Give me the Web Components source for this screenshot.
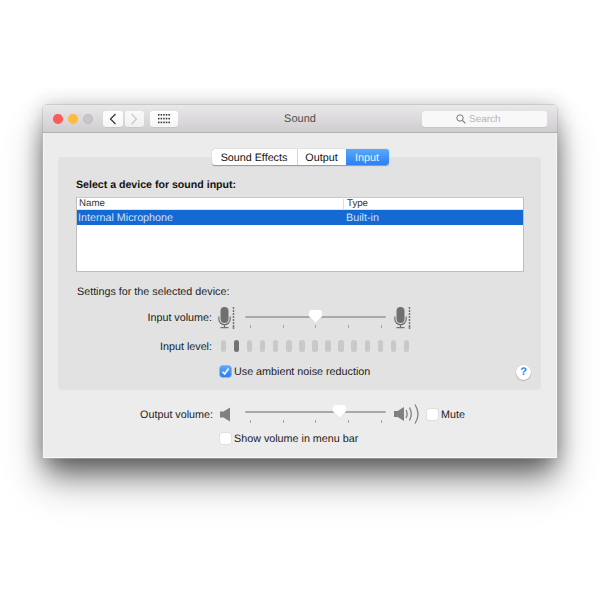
<!DOCTYPE html>
<html>
<head>
<meta charset="utf-8">
<title>Sound</title>
<style>
    html, body { margin: 0; height: 100%; background: #fff; overflow: hidden; }
    body { padding: 105px 0 0 43px; box-sizing: border-box; font: 10.75px "Liberation Sans", Arial, sans-serif; color: #1c1c1c; text-rendering: geometricPrecision; }
</style>
</head>
<body>
<sound-window>
    <title-bar slot="bar" name="Sound"></title-bar>
    <tab-strip active="Input" tabs="Sound Effects,Output,Input"></tab-strip>
    <input-panel></input-panel>
    <output-section></output-section>
</sound-window>

<script>
const mic = `<svg width="18" height="22" viewBox="0 0 18 22">
    <rect x="2.5" y="0" width="8" height="16" rx="4" fill="#707070"/>
    <path d="M.8 9.5v2.5a5.7 5.7 0 0 0 11.4 0V9.5" fill="none" stroke="#707070" stroke-width="1.2"/>
    <path d="M6.5 17.5V20.5M2.5 20.7h8" fill="none" stroke="#707070" stroke-width="1.3"/>
    <g fill="#666"><circle cx="15.5" cy="1" r=".9"/><circle cx="15.5" cy="4" r=".9"/><circle cx="15.5" cy="7" r=".9"/><circle cx="15.5" cy="10" r=".9"/><circle cx="15.5" cy="13" r=".9"/><circle cx="15.5" cy="16" r=".9"/><circle cx="15.5" cy="19" r=".9"/><circle cx="15.5" cy="21" r=".9"/></g>
</svg>`;

const speakerBody = `<path d="M0 4h3.5L10 0v14L3.5 10H0z" fill="#808080"/>`;

const icons = {
    mic,
    quiet: `<svg width="11" height="15" viewBox="0 0 11 14">${speakerBody}</svg>`,
    loud: `<svg width="26" height="20" viewBox="0 0 26 20"><g transform="translate(0 3)">${speakerBody}</g>
        <g fill="none" stroke="#808080" stroke-width="1.3"><path d="M12 6q2.2 4 0 8"/><path d="M15.5 3.5q3.5 6.5 0 13"/><path d="M21 .5q6 9.5 0 19"/></g></svg>`
};

class SoundWindow extends HTMLElement {
    constructor() {
        super();
        this.attachShadow({mode: 'open'}).innerHTML = `
            <style>
                :host { display: flex; flex-direction: column; width: 514px; height: 353px; background: #ececec; border-radius: 4px 4px 1px 1px;
                    box-shadow: inset 0 -1px 0 #fafafa, inset 1px 0 0 #f6f6f6, inset -1px 0 0 #f6f6f6, 0 0 0 .5px #b5b5b5, 0 18px 26px -4px rgba(0,0,0,.5), 0 26px 42px rgba(0,0,0,.22), 0 0 20px rgba(0,0,0,.2); overflow: visible; }
            </style>
            <slot name="bar"></slot>
            <slot></slot>`;
    }
}

class TitleBar extends HTMLElement {
    constructor() {
        super();
        this.attachShadow({mode: 'open'}).innerHTML = `
            <style>
                :host { display: flex; align-items: center; height: 28px; box-sizing: border-box; padding: 1px 10px 0 10px; position: relative; border-radius: 4px 4px 0 0;
                    background: linear-gradient(#e9e7e9, #cfcdcf); border-bottom: 1px solid #b1b1b1; }
                .lights { display: flex; gap: 5.5px; margin-right: 10px; }
                .lights i { width: 9.5px; height: 9.5px; border-radius: 50%; box-sizing: border-box; }
                .btn { height: 16px; background: linear-gradient(#fff, #f5f5f5); border-radius: 3px; display: flex; align-items: center; justify-content: center; box-shadow: 0 .5px 0 #bbb; }
                .name { position: absolute; left: 0; right: 0; text-align: center; font-size: 11px; color: #4f4f4f; }
                .search { margin-left: auto; width: 125px; height: 16px; background: #f8f8f8; border-radius: 3px; box-shadow: 0 .5px 0 #bbb; display: flex; align-items: center; gap: 3px; padding-left: 34px; box-sizing: border-box; color: #b5b5b5; position: relative; font-size: 10px; }
            </style>
            <div class="lights">
                <i style="background:#fc5b57"></i><i style="background:#fdbb3f"></i><i style="background:#c8c6c8;border:.5px solid #bbb"></i>
            </div>
            <div class="btn" style="width:20px;margin-right:2px">
                <svg width="8" height="12" viewBox="0 0 8 12"><path d="M6.5 1L1.5 6l5 5" fill="none" stroke="#333" stroke-width="1.2"/></svg>
            </div>
            <div class="btn" style="width:19px;margin-right:6px;opacity:.85">
                <svg width="8" height="12" viewBox="0 0 8 12"><path d="M1.5 1l5 5-5 5" fill="none" stroke="#c4c4c4" stroke-width="1.2"/></svg>
            </div>
            <div class="btn" style="width:28px">
                <svg width="12" height="10" viewBox="0 0 12 10" fill="#333">
                    ${[0, 3.8, 7.6].map(y => [0, 2.6, 5.2, 7.8, 10.4].map(x => `<rect x="${x}" y="${y}" width="1.5" height="1.6"/>`).join('')).join('')}
                </svg>
            </div>
            <div class="name">${this.getAttribute('name')}</div>
            <div class="search">
                <svg width="10" height="10" viewBox="0 0 10 10"><circle cx="4" cy="4" r="3.2" fill="none" stroke="#777"/><path d="M6.4 6.4L9.4 9.4" stroke="#777" stroke-width="1.1"/></svg>
                <span>Search</span>
            </div>`;
    }
}

class TabStrip extends HTMLElement {
    constructor() {
        super();
        const active = this.getAttribute('active');
        const widths = {'Sound Effects': 85, 'Output': 49, 'Input': 43};
        const tabs = this.getAttribute('tabs').split(',').map(t =>
            `<div class="tab ${t === active ? 'on' : ''}" style="width:${widths[t]}px">${t}</div>`).join('');
        this.attachShadow({mode: 'open'}).innerHTML = `
            <style>
                :host { display: flex; justify-content: center; margin: 16px 0 -8px 0; position: relative; z-index: 1; }
                .strip { display: flex; height: 16px; border-radius: 3px; background: #fff; box-shadow: 0 .5px 1px rgba(0,0,0,.35); overflow: hidden; }
                .tab { text-align: center; padding-top: 1px; line-height: 16px; height: 16px; font-size: 10.75px; color: #111; border-left: 1px solid #d6d6d6; box-sizing: border-box; }
                .tab:first-child { border-left: 0; }
                .on { background: linear-gradient(#5aa9fb, #2b80f5); color: #eaf3ff; border-left: 0; }
            </style>
            <div class="strip">${tabs}</div>`;
    }
}

class DeviceTable extends HTMLElement {
    constructor() {
        super();
        this.attachShadow({mode: 'open'}).innerHTML = `
            <style>
                :host { display: block; height: 75px; box-sizing: border-box; background: #fff; border: 1px solid #bdbdbd; border-top-color: #c9c9c9; font-size: 9.7px; }
                .row { display: grid; grid-template-columns: 266px 1fr; align-items: center; }
                .head { height: 11px; border-bottom: 1px solid #e3e3e3; color: #333; }
                .head span { padding-left: 2px; }
                .head span + span { border-left: 1px solid #ddd; padding-left: 3px; line-height: 10px; }
                .sel { height: 15px; background: #1469d2; color: #cfe0f7; font-size: 10.75px; }
                .sel span { padding-left: 1px; }
                .sel span + span { padding-left: 3px; }
            </style>
            <div class="row head"><span>Name</span><span>Type</span></div>
            <div class="row sel"><span>Internal Microphone</span><span>Built-in</span></div>`;
    }
}

class TickSlider extends HTMLElement {
    constructor() {
        super();
        const at = this.getAttribute('at');
        const ticks = Array.from({length: 5}, () => '<i></i>').join('');
        this.attachShadow({mode: 'open'}).innerHTML = `
            <style>
                :host { display: block; width: 141px; height: 20px; position: relative; }
                .track { position: absolute; left: 0; right: 0; top: 6px; height: 2px; background: #a9a9a9; border-radius: 1px; }
                .ticks { position: absolute; left: 5px; right: 4.5px; top: 15px; display: flex; justify-content: space-between; }
                .ticks i { width: 1px; height: 3px; background: #a5a5a5; }
                svg { position: absolute; top: 0; left: ${at}px; filter: drop-shadow(0 .5px .5px rgba(0,0,0,.35)); }
            </style>
            <div class="track"></div>
            <div class="ticks">${ticks}</div>
            <svg width="13" height="14" viewBox="0 0 12 14" preserveAspectRatio="none"><path d="M1.5 0h9A1.5 1.5 0 0 1 12 1.5V6.5L6 13 0 6.5V1.5A1.5 1.5 0 0 1 1.5 0z" fill="#fff"/></svg>`;
    }
}

class CheckBox extends HTMLElement {
    constructor() {
        super();
        const on = this.hasAttribute('checked');
        this.attachShadow({mode: 'open'}).innerHTML = `
            <style>
                :host { display: inline-flex; align-items: center; gap: 3px; }
                .box { width: 11px; height: 11px; border-radius: 2.5px; box-sizing: border-box; display: flex; align-items: center; justify-content: center;
                    background: ${on ? 'linear-gradient(#5aa9fb,#2b80f5)' : '#fff'}; box-shadow: 0 0 0 .5px ${on ? '#3d8cf0' : '#d2d2d2'}; }
                .text { padding-top: 2px; }
            </style>
            <span class="box">${on ? '<svg width="9" height="9" viewBox="0 0 9 9"><path d="M1.5 4.8L3.6 7 7.6 1.5" fill="none" stroke="#fff" stroke-width="1.5"/></svg>' : ''}</span>
            <span class="text"><slot></slot></span>`;
    }
}

class LevelMeter extends HTMLElement {
    constructor() {
        super();
        const lit = Number(this.getAttribute('lit'));
        const pills = Array.from({length: 15}, (_, i) => `<i class="${i < lit && i === lit - 1 ? 'lit' : ''}"></i>`).join('');
        this.attachShadow({mode: 'open'}).innerHTML = `
            <style>
                :host { display: flex; gap: 7.75px; }
                i { width: 5.3px; height: 12px; border-radius: 2.5px; background: #c9c9c9; }
                .lit { background: #727272; }
            </style>
            ${pills}`;
    }
}

class InputPanel extends HTMLElement {
    constructor() {
        super();
        this.attachShadow({mode: 'open'}).innerHTML = `
            <style>
                :host { display: block; position: relative; height: 233px; margin: 0 16px 0 15px; box-sizing: border-box; padding: 22px 17px 0 18px; background: #e2e2e2; border-radius: 3px; }
                h3 { margin: 0 0 6px; font-size: 10.6px; line-height: 12px; color: #111; }
                p { margin: 14px 0 0 1px; line-height: 13px; color: #222; }
                .form { display: grid; grid-template-columns: 135px 33px 141px auto; margin-left: 1px; column-gap: 0; }
                .lab { text-align: right; line-height: 14px; }
                .vol { margin-top: 7px; align-items: start; height: 22px; }
                .vol .lab { margin-top: 5px; }
                .vol .icon { padding-left: 6px; margin-top: 1px; }
                .vol tick-slider { margin-top: 4px; }
                .vol .end { padding-left: 8px; margin-top: 1px; }
                .lev { display: flex; margin: 10px 0 0 1px; align-items: center; }
                .lev .lab { width: 135px; padding-top: 2px; }
                level-meter { margin-left: 9px; }
                check-box { margin: 10px 0 0 144px; line-height: 13px; }
                .help { position: absolute; right: 10px; bottom: 10px; width: 15px; height: 15px; border-radius: 50%; background: #fff; color: #2b80f5; box-shadow: 0 .5px 1px rgba(0,0,0,.4);
                    font: bold 11px/15px "Liberation Sans", sans-serif; text-align: center; }
            </style>
            <h3>Select a device for sound input:</h3>
            <device-table></device-table>
            <p>Settings for the selected device:</p>
            <div class="form vol">
                <span class="lab">Input volume:</span>
                <span class="icon">${icons.mic}</span>
                <tick-slider at="64"></tick-slider>
                <span class="end">${icons.mic}</span>
            </div>
            <div class="lev"><span class="lab">Input level:</span><level-meter lit="2"></level-meter></div>
            <check-box checked>Use ambient noise reduction</check-box>
            <div class="help">?</div>`;
    }
}

class OutputSection extends HTMLElement {
    constructor() {
        super();
        this.attachShadow({mode: 'open'}).innerHTML = `
            <style>
                :host { display: block; padding: 14px 0 0 0; }
                .row { display: flex; align-items: flex-start; height: 27px; }
                .lab { width: 170px; text-align: right; line-height: 14px; margin-top: 4px; }
                .quiet { margin: 3px 0 0 7px; width: 25px; }
                .loud { margin: 0 0 0 8px; width: 25px; }
                tick-slider { margin-top: 1px; }
                .mute { margin: 3px 0 0 8px; }
                .show { margin-left: 177px; }
            </style>
            <div class="row">
                <span class="lab">Output volume:</span>
                <span class="quiet">${icons.quiet}</span>
                <tick-slider at="88"></tick-slider>
                <span class="loud">${icons.loud}</span>
                <check-box class="mute">Mute</check-box>
            </div>
            <check-box class="show">Show volume in menu bar</check-box>`;
    }
}

customElements.define('sound-window', SoundWindow);
customElements.define('title-bar', TitleBar);
customElements.define('tab-strip', TabStrip);
customElements.define('device-table', DeviceTable);
customElements.define('tick-slider', TickSlider);
customElements.define('check-box', CheckBox);
customElements.define('level-meter', LevelMeter);
customElements.define('input-panel', InputPanel);
customElements.define('output-section', OutputSection);
</script>
</body>
</html>
